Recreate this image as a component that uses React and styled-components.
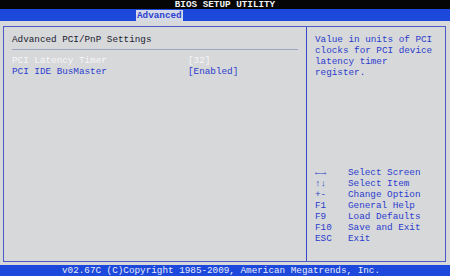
import React from 'react';
import styled, { createGlobalStyle } from 'styled-components';

const Global = createGlobalStyle`
	*, *::before, *::after {
		box-sizing: border-box;
	}
	html, body {
		margin: 0;
		padding: 0;
		background: #d6d8da;
	}
	#root {
		width: 450px;
		height: 276px;
	}
`;

const Screen = styled.div`
	width: 450px;
	height: 276px;
	display: flex;
	flex-direction: column;
	font-family: 'Liberation Mono', 'DejaVu Sans Mono', monospace;
	font-size: 9.3px;
	line-height: 11px;
	overflow: hidden;
`;

const TitleBar = styled.div`
	height: 9px;
	background: #050505;
	color: #f2f2f2;
	font-weight: bold;
	text-align: center;
	line-height: 10px;
`;

const TabBar = styled.div`
	height: 12px;
	background: #1c48dc;
	display: flex;
	align-items: flex-end;
	padding-left: 136px;
`;

const Tab = styled.div`
	height: 11px;
	padding: 0 1px;
	background: #d6dae6;
	color: #2a40d0;
	font-weight: bold;
	line-height: 11px;
`;

const Main = styled.div`
	flex: 1;
	background: #d6d8da;
	padding: 5px 4px 3px 3px;
	display: flex;
`;

const Frame = styled.div`
	flex: 1;
	border: 1px solid #4a58c8;
	display: flex;
`;

const LeftPanel = styled.div`
	width: 303px;
	flex-shrink: 0;
	border-right: 1px solid #3848c8;
	padding: 7px 8px 0 8px;
`;

const Header = styled.div`
	color: #1c2230;
	padding-bottom: 4px;
	border-bottom: 1px solid #9ea4c0;
	margin-bottom: 5px;
`;

const Row = styled.div`
	display: grid;
	grid-template-columns: 176px auto;
	color: ${(p) => (p.$active ? '#f6f6f8' : '#2c3ccc')};
`;

const RightPanel = styled.div`
	flex: 1;
	padding: 7px 4px 17px 8px;
	display: flex;
	flex-direction: column;
	justify-content: space-between;
	color: #2c3ccc;
`;

const Help = styled.div`
	white-space: pre;
`;

const Keys = styled.div`
	display: grid;
	grid-template-columns: 33px auto;
`;

const Footer = styled.div`
	height: 11px;
	background: #1c48dc;
	color: #e8ecf8;
	text-align: center;
	line-height: 12px;
	padding-right: 8px;
`;

const keys = [
	['←→', 'Select Screen'],
	['↑↓', 'Select Item'],
	['+-', 'Change Option'],
	['F1', 'General Help'],
	['F9', 'Load Defaults'],
	['F10', 'Save and Exit'],
	['ESC', 'Exit'],
];

export default function App() {
	return (
		<Screen>
			<Global />
			<TitleBar>BIOS SETUP UTILITY</TitleBar>
			<TabBar>
				<Tab>Advanced</Tab>
			</TabBar>
			<Main>
				<Frame>
					<LeftPanel>
						<Header>Advanced PCI/PnP Settings</Header>
						<Row $active>
							<span>PCI Latency Timer</span>
							<span>[32]</span>
						</Row>
						<Row>
							<span>PCI IDE BusMaster</span>
							<span>[Enabled]</span>
						</Row>
					</LeftPanel>
					<RightPanel>
						<Help>
							{'Value in units of PCI\nclocks for PCI device\nlatency timer\nregister.'}
						</Help>
						<Keys>
							{keys.map(([k, d]) => (
								<React.Fragment key={k}>
									<span>{k}</span>
									<span>{d}</span>
								</React.Fragment>
							))}
						</Keys>
					</RightPanel>
				</Frame>
			</Main>
			<Footer>v02.67C (C)Copyright 1985-2009, American Megatrends, Inc.</Footer>
		</Screen>
	);
}
